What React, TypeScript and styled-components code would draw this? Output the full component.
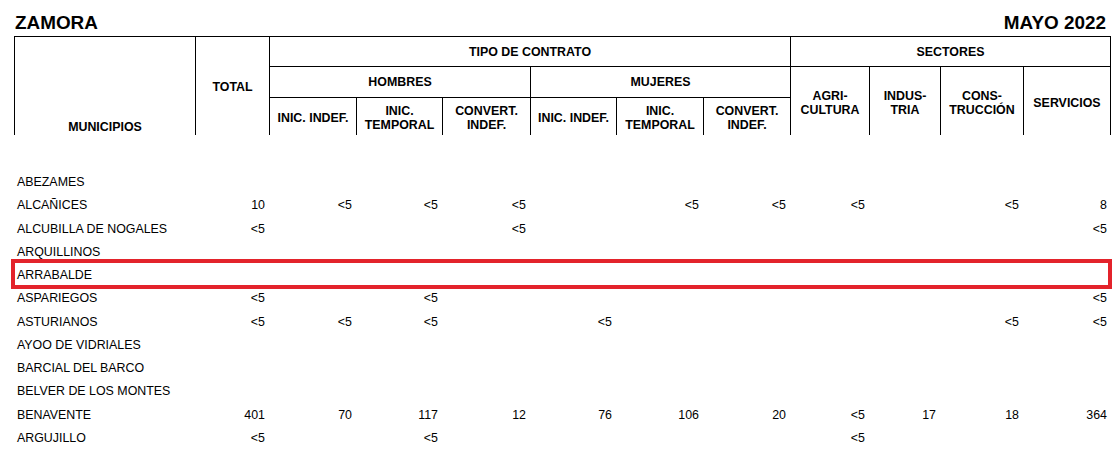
import React, { FC } from 'react'
import styled, { createGlobalStyle } from 'styled-components'

const GlobalStyle = createGlobalStyle`
  html, body {
    margin: 0;
    padding: 0;
    background: #fff;
  }
  body {
    font-family: 'Liberation Sans', Arial, sans-serif;
    color: #000;
  }
`

const COLUMNS = '181px 74px 87px 86px 88px 86px 87px 87px 79px 71px 83px 88px'

type Row = { name: string; values: string[]; marked?: boolean }

const E = ''
const rows: Row[] = [
  { name: 'ABEZAMES', values: [E, E, E, E, E, E, E, E, E, E, E] },
  { name: 'ALCAÑICES', values: ['10', '<5', '<5', '<5', E, '<5', '<5', '<5', E, '<5', '8'] },
  { name: 'ALCUBILLA DE NOGALES', values: ['<5', E, E, '<5', E, E, E, E, E, E, '<5'] },
  { name: 'ARQUILLINOS', values: [E, E, E, E, E, E, E, E, E, E, E] },
  { name: 'ARRABALDE', values: [E, E, E, E, E, E, E, E, E, E, E], marked: true },
  { name: 'ASPARIEGOS', values: ['<5', E, '<5', E, E, E, E, E, E, E, '<5'] },
  { name: 'ASTURIANOS', values: ['<5', '<5', '<5', E, '<5', E, E, E, E, '<5', '<5'] },
  { name: 'AYOO DE VIDRIALES', values: [E, E, E, E, E, E, E, E, E, E, E] },
  { name: 'BARCIAL DEL BARCO', values: [E, E, E, E, E, E, E, E, E, E, E] },
  { name: 'BELVER DE LOS MONTES', values: [E, E, E, E, E, E, E, E, E, E, E] },
  { name: 'BENAVENTE', values: ['401', '70', '117', '12', '76', '106', '20', '<5', '17', '18', '364'] },
  { name: 'ARGUJILLO', values: ['<5', E, '<5', E, E, E, E, '<5', E, E, E] },
]

const Page = styled.div`
  width: 1097px;
  padding-left: 14px;
`

const TitleBar = styled.div`
  box-sizing: border-box;
  height: 36px;
  padding: 13px 5px 0 1px;
  display: flex;
  justify-content: space-between;
  font-size: 18.9px;
  line-height: 20px;
  font-weight: bold;
`

const Header = styled.div`
  display: grid;
  grid-template-columns: ${COLUMNS};
  grid-template-rows: 30px 31px 38px;
  font-size: 12.4px;
  line-height: 14px;
  font-weight: bold;
`

const HeadCell = styled.div<{
  $col: number
  $row: number
  $colSpan?: number
  $rowSpan?: number
  $bottom?: boolean
  $last?: boolean
  $padTop?: number
}>`
  grid-column: ${(p) => p.$col} / span ${(p) => p.$colSpan || 1};
  grid-row: ${(p) => p.$row} / span ${(p) => p.$rowSpan || 1};
  box-sizing: border-box;
  border-left: 1px solid #000;
  border-top: 1px solid #000;
  border-right: ${(p) => (p.$last ? '1px solid #000' : 'none')};
  display: flex;
  align-items: ${(p) => (p.$bottom ? 'flex-end' : 'center')};
  justify-content: center;
  text-align: center;
  padding-top: ${(p) => p.$padTop || 0}px;
  padding-bottom: ${(p) => (p.$bottom ? 1 : 0)}px;
`

const Body = styled.div`
  padding-top: 36px;
  font-size: 12.4px;
`

const DataRow = styled.div<{ $marked?: boolean }>`
  position: relative;
  display: grid;
  grid-template-columns: ${COLUMNS};
  height: 23.27px;
  line-height: 23.27px;

  &::after {
    content: '';
    display: ${(p) => (p.$marked ? 'block' : 'none')};
    position: absolute;
    left: -3px;
    right: -1px;
    top: -5px;
    bottom: -2px;
    border: 4.5px solid #e3232b;
  }
`

const NameCell = styled.div`
  padding-left: 3px;
  white-space: nowrap;
`

const NumCell = styled.div`
  text-align: right;
  padding-right: 4px;
`

const subHeads = ['INIC. INDEF.', 'INIC.<br>TEMPORAL', 'CONVERT.<br>INDEF.']
const sectors = ['AGRI-<br>CULTURA', 'INDUS-<br>TRIA', 'CONS-<br>TRUCCIÓN', 'SERVICIOS']

const Lines: FC<{ text: string }> = ({ text }) => (
  <span>
    {text.split('<br>').map((t, i) => (
      <React.Fragment key={i}>
        {i > 0 && <br />}
        {t}
      </React.Fragment>
    ))}
  </span>
)

const App: FC = () => (
  <Page>
    <GlobalStyle />
    <TitleBar>
      <span>ZAMORA</span>
      <span>MAYO 2022</span>
    </TitleBar>
    <Header>
      <HeadCell $col={1} $row={1} $rowSpan={3} $bottom>
        MUNICIPIOS
      </HeadCell>
      <HeadCell $col={2} $row={1} $rowSpan={3} $padTop={2}>
        TOTAL
      </HeadCell>
      <HeadCell $col={3} $row={1} $colSpan={6}>
        TIPO DE CONTRATO
      </HeadCell>
      <HeadCell $col={9} $row={1} $colSpan={4} $last>
        SECTORES
      </HeadCell>
      <HeadCell $col={3} $row={2} $colSpan={3}>
        HOMBRES
      </HeadCell>
      <HeadCell $col={6} $row={2} $colSpan={3}>
        MUJERES
      </HeadCell>
      {[0, 1].map((g) =>
        subHeads.map((s, i) => (
          <HeadCell key={`${g}-${i}`} $col={3 + g * 3 + i} $row={3} $padTop={2}>
            <Lines text={s} />
          </HeadCell>
        ))
      )}
      {sectors.map((s, i) => (
        <HeadCell key={s} $col={9 + i} $row={2} $rowSpan={2} $padTop={4} $last={i === sectors.length - 1}>
          <Lines text={s} />
        </HeadCell>
      ))}
    </Header>
    <Body>
      {rows.map((r) => (
        <DataRow key={r.name} $marked={r.marked}>
          <NameCell>{r.name}</NameCell>
          {r.values.map((v, i) => (
            <NumCell key={i}>{v}</NumCell>
          ))}
        </DataRow>
      ))}
    </Body>
  </Page>
)

export default App
